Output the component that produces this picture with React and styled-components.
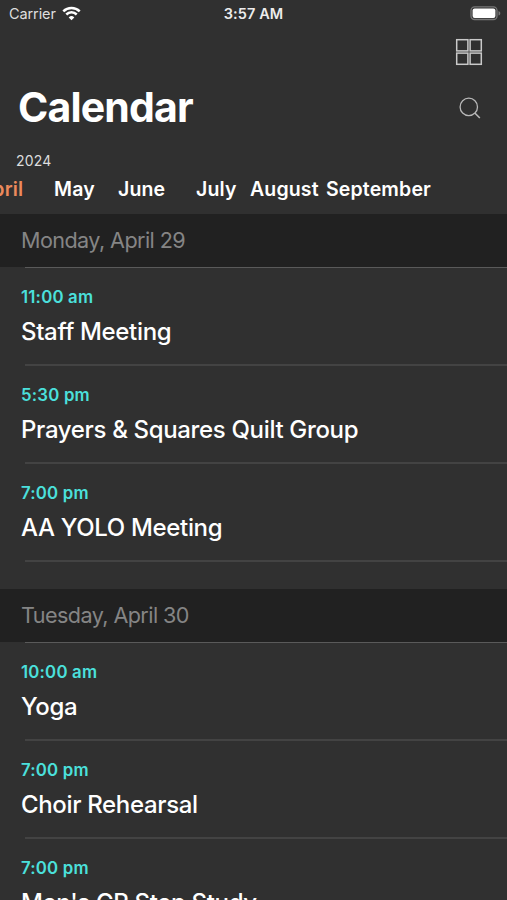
import React from "react";
import styled, { createGlobalStyle } from "styled-components";

const GlobalStyle = createGlobalStyle`
  body {
    margin: 0;
    background-color: #303030;
    font-family: Inter, "Liberation Sans", sans-serif;
    color: #ffffff;
  }
`;

const Screen = styled.div`
  width: 507px;
  height: 900px;
  overflow: hidden;
  background-color: #303030;

  display: flex;
  flex-direction: column;
`;

const StatusBar = styled.div`
  height: 28px;
  padding: 0 6px 0 9px;
  flex-shrink: 0;

  display: grid;
  grid-template-columns: 1fr auto 1fr;
  align-items: center;
`;

const Carrier = styled.div`
  display: flex;
  align-items: center;
  gap: 6px;
  color: #dedede;
  font-size: 14.5px;
  line-height: 28px;
  letter-spacing: -0.1px;
`;

const WifiSvg = styled.svg`
  margin-bottom: 2px;
`;

const Clock = styled.div`
  margin-right: 3px;
  color: #ececec;
  font-size: 14.5px;
  font-weight: 600;
  line-height: 28px;
  letter-spacing: 0.1px;
`;

const BatterySvg = styled.svg`
  margin-bottom: 2px;
  justify-self: end;
`;

const Toolbar = styled.div`
  height: 48px;
  padding-right: 24px;
  flex-shrink: 0;

  display: flex;
  justify-content: flex-end;
  align-items: center;
`;

const TitleRow = styled.div`
  height: 64px;
  padding: 0 26px 0 18px;
  flex-shrink: 0;

  display: flex;
  justify-content: space-between;
  align-items: center;
`;

const PageTitle = styled.h1`
  margin: 0;
  padding-bottom: 2px;
  font-size: 41px;
  font-weight: 700;
  line-height: 62px;
  letter-spacing: -0.85px;
`;

const Year = styled.div`
  margin-top: 11px;
  padding-left: 16px;
  flex-shrink: 0;
  color: #dddddd;
  font-size: 14px;
  line-height: 20px;
  letter-spacing: 0.2px;
`;

const Months = styled.div`
  height: 43px;
  margin-left: -22px;
  flex-shrink: 0;

  display: flex;
`;

const Month = styled.div`
  width: ${props => props.$width}px;
  flex-shrink: 0;
  color: ${props => (props.$active ? "#ec8a5c" : "#ffffff")};
  font-size: 19.5px;
  font-weight: 600;
  line-height: 37px;
  letter-spacing: 0.15px;
  white-space: nowrap;
`;

const DayHeader = styled.div`
  height: 53px;
  padding-left: 21px;
  background-color: #212121;
  color: #858585;
  font-size: 21.6px;
  line-height: 53px;
  letter-spacing: -0.58px;
`;

const DaySection = styled.section`
  height: 375px;
  flex-shrink: 0;
`;

const EventRow = styled.div`
  height: 98px;
  padding: 19px 0 0 21px;
  box-sizing: border-box;
  background: linear-gradient(#434343, #434343) 25px 0 / 482px 1px no-repeat,
    linear-gradient(#434343, #434343) 25px 100% / 482px 1px no-repeat;

  ${DayHeader} + & {
    background: linear-gradient(#5a5a5a, #5a5a5a) 25px 0 / 482px 1px no-repeat,
      linear-gradient(#434343, #434343) 25px 100% / 482px 1px no-repeat;
  }
`;

const SectionEnd = styled.div`
  height: 1px;
  margin-left: 25px;
  background-color: #434343;
`;

const EventTime = styled.div`
  color: #4be0dc;
  font-size: 16.8px;
  font-weight: 600;
  line-height: 22px;
  letter-spacing: 0.2px;
`;

const EventTitle = styled.div`
  margin-top: 7px;
  font-size: 24px;
  font-weight: 500;
  line-height: 34px;
  letter-spacing: -0.34px;
  white-space: nowrap;
`;

const months = [
  { name: "April", width: 76, active: true },
  { name: "May", width: 64 },
  { name: "June", width: 78 },
  { name: "July", width: 54 },
  { name: "August", width: 76 },
  { name: "September", width: 110 },
];

const days = [
  {
    date: "Monday, April 29",
    events: [
      { time: "11:00 am", title: "Staff Meeting" },
      { time: "5:30 pm", title: "Prayers & Squares Quilt Group" },
      { time: "7:00 pm", title: "AA YOLO Meeting" },
    ],
  },
  {
    date: "Tuesday, April 30",
    events: [
      { time: "10:00 am", title: "Yoga" },
      { time: "7:00 pm", title: "Choir Rehearsal" },
      { time: "7:00 pm", title: "Men's CR Step Study" },
    ],
  },
];

const WifiIcon = () => (
  <WifiSvg width="19" height="15" viewBox="0 0 19 15" fill="none" stroke="#fff" strokeWidth="2.5">
    <path d="M1.3 5.3a11.6 11.6 0 0 1 16.4 0" />
    <path d="M4.3 8.5a7.3 7.3 0 0 1 10.4 0" />
    <path d="M9.5 14.3 6.7 11.4a4 4 0 0 1 5.6 0Z" fill="#fff" stroke="none" />
  </WifiSvg>
);

const BatteryIcon = () => (
  <BatterySvg width="31" height="15" viewBox="0 0 31 15">
    <rect x="1" y="0.9" width="26" height="12.6" rx="3.6" fill="none" stroke="#777" strokeWidth="1.3" />
    <rect x="2.6" y="2.4" width="22.8" height="9.6" rx="2" fill="#fff" />
    <path d="M28.5 5v4.6c1.2-.4 1.8-1.3 1.8-2.3s-.6-1.9-1.8-2.3Z" fill="#777" />
  </BatterySvg>
);

const GridIcon = () => (
  <svg width="28" height="28" viewBox="0 0 28 28" fill="none" stroke="#c9c9c9" strokeWidth="1.5">
    <rect x="1.7" y="1.7" width="11.2" height="11.2" />
    <rect x="15.1" y="1.7" width="11.2" height="11.2" />
    <rect x="1.7" y="15.1" width="11.2" height="11.2" />
    <rect x="15.1" y="15.1" width="11.2" height="11.2" />
  </svg>
);

const SearchIcon = () => (
  <svg width="22" height="22" viewBox="0 0 22 22" fill="none" stroke="#b8b8b8" strokeWidth="1.3">
    <circle cx="9.8" cy="9.9" r="8.7" />
    <path d="m15.8 16 5 5" strokeWidth="1.6" />
  </svg>
);

const App = () => (
  <Screen>
    <GlobalStyle />
    <StatusBar>
      <Carrier>
        Carrier
        <WifiIcon />
      </Carrier>
      <Clock>3:57 AM</Clock>
      <BatteryIcon />
    </StatusBar>
    <Toolbar>
      <GridIcon />
    </Toolbar>
    <TitleRow>
      <PageTitle>Calendar</PageTitle>
      <SearchIcon />
    </TitleRow>
    <Year>2024</Year>
    <Months>
      {months.map(month => (
        <Month key={month.name} $width={month.width} $active={month.active}>
          {month.name}
        </Month>
      ))}
    </Months>
    {days.map(day => (
      <DaySection key={day.date}>
        <DayHeader>{day.date}</DayHeader>
        {day.events.map(event => (
          <EventRow key={event.title}>
            <EventTime>{event.time}</EventTime>
            <EventTitle>{event.title}</EventTitle>
          </EventRow>
        ))}
        <SectionEnd />
      </DaySection>
    ))}
  </Screen>
);

export default App;
